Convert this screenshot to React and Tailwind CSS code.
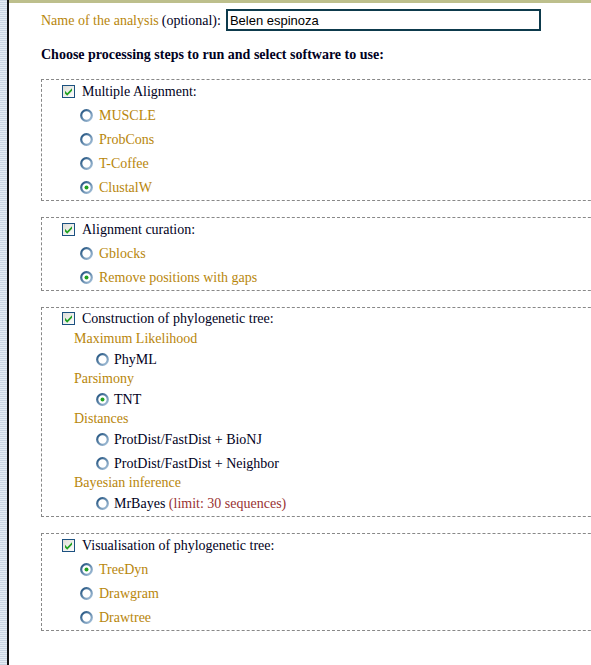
import { useState } from 'react'

const gold = 'text-[#b8860b]'

function Checkbox() {
  return (
    <svg width="13" height="13" viewBox="0 0 13 13" className="shrink-0">
      <defs>
        <linearGradient id="cbg" x1="0" y1="0" x2="1" y2="1">
          <stop offset="0" stopColor="#dcdcd6" />
          <stop offset="1" stopColor="#ffffff" />
        </linearGradient>
      </defs>
      <rect x="0.5" y="0.5" width="12" height="12" fill="url(#cbg)" stroke="#1c5180" />
      <path d="M3 5.8 L5.2 8.2 L10 3.2 L10 5.8 L5.2 10.8 L3 8.4 Z" fill="#21a121" />
    </svg>
  )
}

function Radio({ checked }) {
  return (
    <svg width="13" height="13" viewBox="0 0 13 13" className="shrink-0">
      <defs>
        <linearGradient id="rg" x1="0" y1="0" x2="1" y2="1">
          <stop offset="0" stopColor="#1d4f7d" />
          <stop offset="1" stopColor="#a9c4dc" />
        </linearGradient>
      </defs>
      <circle cx="6.5" cy="6.5" r="5.3" fill="#fff" stroke="url(#rg)" strokeWidth="2.2" />
      {checked && <circle cx="6.5" cy="6.5" r="2" fill="#21a121" />}
    </svg>
  )
}

function Group({ title, children, className = '' }) {
  return (
    <div className={`border border-dashed border-[#888] w-[600px] ${className}`}>
      <div className="flex items-center h-[24px] pb-[2px] pl-[20px] gap-[7px] text-[#000022]">
        <Checkbox />
        <span>{title}</span>
      </div>
      {children}
    </div>
  )
}

function Option({ label, checked, color = gold, extra }) {
  return (
    <div className={`flex items-center h-[24px] pb-[2px] pl-[38px] gap-[6px] ${color}`}>
      <Radio checked={checked} />
      <span>
        {label}
        {extra}
      </span>
    </div>
  )
}

function SubHead({ children }) {
  return <div className={`h-[20px] leading-[20px] pl-[32px] ${gold}`}>{children}</div>
}

function TreeOption({ label, checked, extra, className = '' }) {
  return (
    <div className={`flex items-center h-[20px] pl-[54px] gap-[5px] text-[#000022] ${className}`}>
      <Radio checked={checked} />
      <span>
        {label}
        {extra}
      </span>
    </div>
  )
}

export default function App() {
  const [name, setName] = useState('Belen espinoza')

  return (
    <div className="flex h-[665px] w-[591px] overflow-hidden bg-white font-['Liberation_Serif',serif] text-[14px]">
      <div className="w-[7px] shrink-0 bg-[repeating-linear-gradient(to_bottom,#c9d5e2_0px,#c9d5e2_1px,#e6edf4_1px,#e6edf4_2px)]" />
      <div className="w-[2px] shrink-0 bg-[#111]" />
      <div className="flex-1 min-w-0">
        <div className="h-[3px] bg-[#bdbf8c]" />
        <div className="pl-[32px]">
          <div className="flex items-center mt-[6px] h-[22px]">
            <span className={gold}>Name of the analysis</span>
            <span className="ml-[3px] text-[#000022]">(optional):</span>
            <input
              value={name}
              onChange={(e) => setName(e.target.value)}
              className="ml-[5px] h-[22px] w-[315px] border-2 border-[#0d3a4c] px-[2px] font-['Liberation_Sans',sans-serif] text-[13px] text-black outline-none"
            />
          </div>
          <div className="mt-[14px] h-[20px] leading-[20px] font-bold text-[#000022]">
            Choose processing steps to run and select software to use:
          </div>

          <Group title="Multiple Alignment:" className="mt-[14px]">
            <Option label="MUSCLE" />
            <Option label="ProbCons" />
            <Option label="T-Coffee" />
            <Option label="ClustalW" checked />
          </Group>

          <Group title="Alignment curation:" className="mt-[16px]">
            <Option label="Gblocks" />
            <Option label="Remove positions with gaps" checked />
          </Group>

          <div className="mt-[16px] border border-dashed border-[#888] w-[600px] pb-[3px]">
            <div className="flex items-center h-[21px] pl-[20px] gap-[7px] text-[#000022]">
              <Checkbox />
              <span>Construction of phylogenetic tree:</span>
            </div>
            <SubHead>Maximum Likelihood</SubHead>
            <TreeOption label="PhyML" />
            <SubHead>Parsimony</SubHead>
            <TreeOption label="TNT" checked />
            <SubHead>Distances</SubHead>
            <TreeOption label="ProtDist/FastDist + BioNJ" />
            <TreeOption label="ProtDist/FastDist + Neighbor" className="mt-[4px]" />
            <SubHead>Bayesian inference</SubHead>
            <TreeOption
              label="MrBayes"
              extra={<span className="text-[#993333]"> (limit: 30 sequences)</span>}
            />
          </div>

          <Group title="Visualisation of phylogenetic tree:" className="mt-[16px]">
            <Option label="TreeDyn" checked />
            <Option label="Drawgram" />
            <Option label="Drawtree" />
          </Group>
        </div>
      </div>
    </div>
  )
}
